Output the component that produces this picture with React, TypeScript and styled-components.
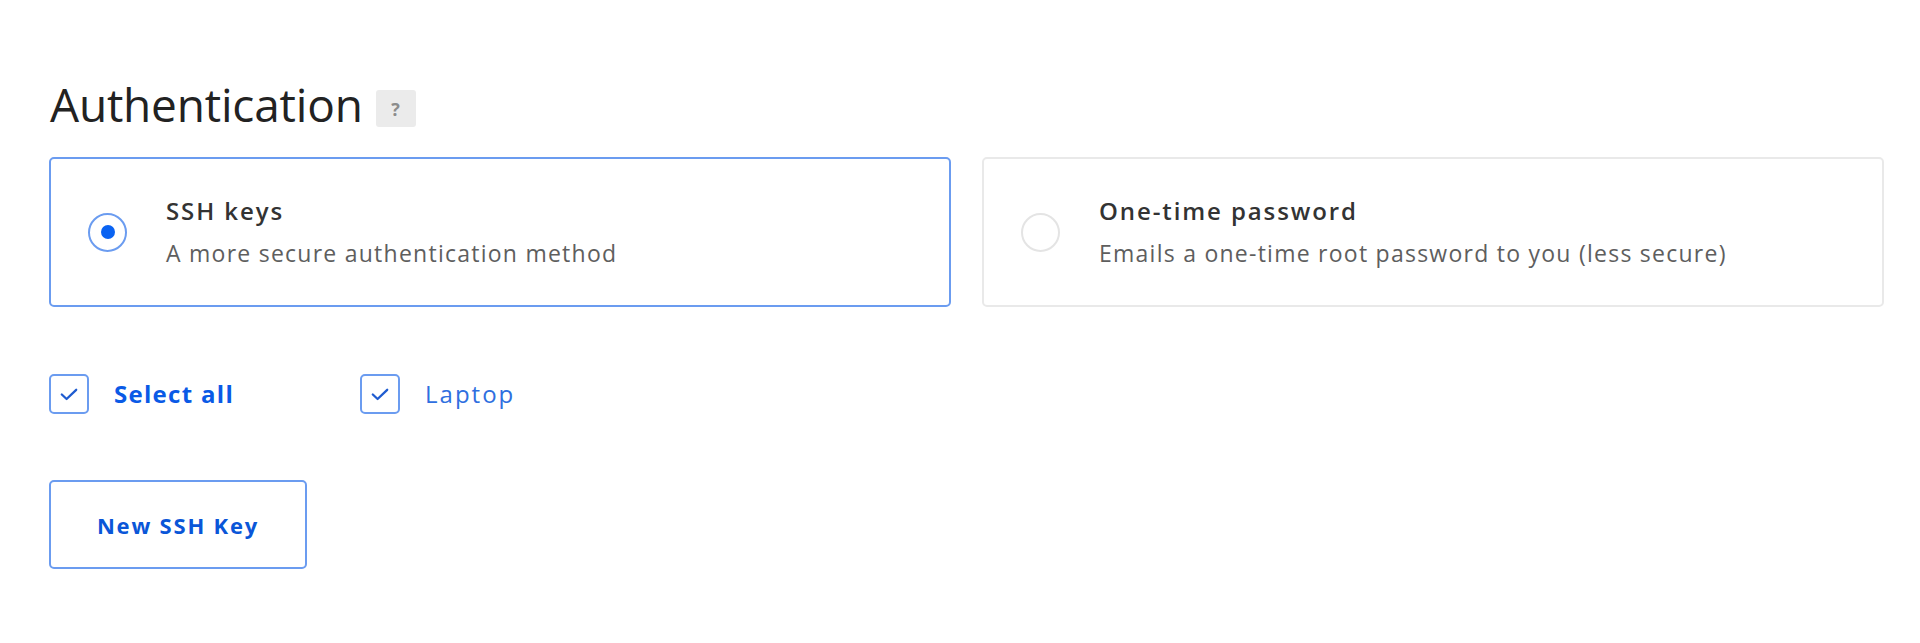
import React from "react";
import styled, { createGlobalStyle } from "styled-components";

const GlobalStyle = createGlobalStyle`
  html, body {
    margin: 0;
    padding: 0;
    background: #ffffff;
  }
  body {
    font-family: "Open Sans", "Liberation Sans", Arial, sans-serif;
    -webkit-font-smoothing: antialiased;
  }
`;

const Page = styled.main`
  box-sizing: border-box;
  width: 1920px;
  height: 643px;
  padding: 76px 36px 0 49px;
  background: #ffffff;
  display: flex;
  flex-direction: column;
`;

const HeadingRow = styled.div`
  display: flex;
  align-items: center;
  gap: 13px;
  padding-left: 1px;
`;

const Heading = styled.h2`
  margin: 0;
  font-family: "Open Sans", "Liberation Sans", sans-serif;
  font-weight: 400;
  font-size: 46px;
  line-height: 56px;
  color: #222222;
  letter-spacing: -0.2px;
`;

const HelpBadge = styled.span`
  display: flex;
  align-items: center;
  justify-content: center;
  width: 40px;
  height: 37px;
  margin-top: 9px;
  border-radius: 3px;
  background: #ebebeb;
  color: #8c8c8c;
  font-size: 18px;
  font-weight: 700;
`;

const Options = styled.div`
  display: flex;
  gap: 31px;
  margin-top: 25px;
`;

const OptionCard = styled.label<{ $selected?: boolean }>`
  box-sizing: border-box;
  flex: 1;
  height: 150px;
  display: flex;
  align-items: center;
  gap: 39px;
  padding-left: 37px;
  border: 2px solid ${(p) => (p.$selected ? "#6b9cf0" : "#e9e9e9")};
  border-radius: 5px;
  background: #ffffff;
  cursor: pointer;
`;

const Radio = styled.span<{ $checked?: boolean }>`
  box-sizing: border-box;
  flex: none;
  width: 39px;
  height: 39px;
  border-radius: 50%;
  border: 2px solid ${(p) => (p.$checked ? "#6b9cf0" : "#e4e4e4")};
  display: flex;
  align-items: center;
  justify-content: center;
  &::after {
    content: "";
    display: ${(p) => (p.$checked ? "block" : "none")};
    width: 14px;
    height: 14px;
    border-radius: 50%;
    background: #0a63f2;
  }
`;

const OptionText = styled.div`
  display: flex;
  flex-direction: column;
  gap: 12px;
`;

const OptionTitle = styled.span`
  font-size: 24px;
  line-height: 30px;
  font-weight: 600;
  color: #333333;
  letter-spacing: 1.9px;
`;

const OptionDesc = styled.span`
  font-size: 23px;
  line-height: 30px;
  font-weight: 400;
  color: #5e5e5e;
  letter-spacing: 1.25px;
`;

const KeyRow = styled.div`
  display: flex;
  align-items: center;
  gap: 126px;
  margin-top: 67px;
`;

const CheckItem = styled.label`
  display: flex;
  align-items: center;
  gap: 25px;
  cursor: pointer;
`;

const CheckBox = styled.span`
  box-sizing: border-box;
  width: 40px;
  height: 40px;
  border: 2px solid #6b9cf0;
  border-radius: 5px;
  background: #ffffff;
  display: flex;
  align-items: center;
  justify-content: center;
`;

const CheckLabel = styled.span<{ $bold?: boolean }>`
  font-size: 24px;
  line-height: 30px;
  font-weight: ${(p) => (p.$bold ? 700 : 400)};
  color: ${(p) => (p.$bold ? "#0a5ae6" : "#2f6fe0")};
  letter-spacing: ${(p) => (p.$bold ? "1.3px" : "2px")};
`;

const OutlineButton = styled.button`
  box-sizing: border-box;
  width: 258px;
  height: 89px;
  margin-top: 66px;
  border: 2px solid #6b9cf0;
  border-radius: 5px;
  background: #ffffff;
  color: #0a56d8;
  font-family: "Open Sans", "Liberation Sans", sans-serif;
  font-size: 22px;
  font-weight: 700;
  letter-spacing: 1.8px;
  cursor: pointer;
`;

const Check = () => (
  <svg width="18" height="13" viewBox="0 0 18 13" fill="none">
    <polyline
      points="1.8,6.5 6.6,11 16.2,1.8"
      stroke="#1f5cd0"
      strokeWidth="2.3"
      strokeLinecap="round"
      strokeLinejoin="round"
    />
  </svg>
);

const options = [
  {
    title: "SSH keys",
    desc: "A more secure authentication method",
    selected: true,
  },
  {
    title: "One-time password",
    desc: "Emails a one-time root password to you (less secure)",
    selected: false,
  },
];

export default function App() {
  return (
    <>
      <GlobalStyle />
      <Page>
        <HeadingRow>
          <Heading>Authentication</Heading>
          <HelpBadge>?</HelpBadge>
        </HeadingRow>
        <Options>
          {options.map((o) => (
            <OptionCard key={o.title} $selected={o.selected}>
              <Radio $checked={o.selected} />
              <OptionText>
                <OptionTitle>{o.title}</OptionTitle>
                <OptionDesc>{o.desc}</OptionDesc>
              </OptionText>
            </OptionCard>
          ))}
        </Options>
        <KeyRow>
          <CheckItem>
            <CheckBox>
              <Check />
            </CheckBox>
            <CheckLabel $bold>Select all</CheckLabel>
          </CheckItem>
          <CheckItem>
            <CheckBox>
              <Check />
            </CheckBox>
            <CheckLabel>Laptop</CheckLabel>
          </CheckItem>
        </KeyRow>
        <div>
          <OutlineButton>New SSH Key</OutlineButton>
        </div>
      </Page>
    </>
  );
}
